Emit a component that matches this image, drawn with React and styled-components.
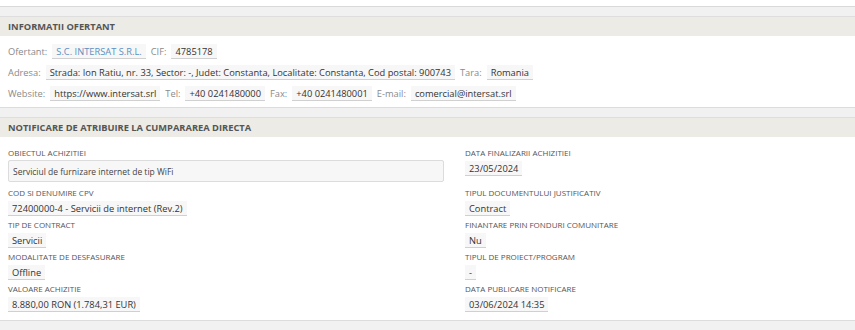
import React from "react";
import styled, { createGlobalStyle } from "styled-components";

const Global = createGlobalStyle`
  html, body { margin: 0; padding: 0; background: #f1f1f1; }
  body { font-family: "Open Sans", "DejaVu Sans", sans-serif; color: #333; }
`;

const Page = styled.div`
  width: 855px;
  height: 330px;
  overflow: hidden;
  background: #f1f1f1;
`;

const PanelTail = styled.div`
  height: 6px;
  background: #fff;
  border-bottom: 1px solid #d9d9d9;
`;

const Panel = styled.section`
  margin-top: 9px;
  background: #fff;
  border-top: 1px solid #dedede;
  border-bottom: 1px solid #dcdcdc;
`;

const PanelHeader = styled.div`
  height: 19px;
  display: flex;
  align-items: center;
  padding: 0 8px;
  background: #ecebe6;
  font-size: 9.3px;
  font-weight: 700;
  color: #555;
`;

const InfoBody = styled.div`
  padding: 8px 8px 6px;
  display: flex;
  flex-direction: column;
  gap: 6px;
`;

const InfoRow = styled.div`
  display: flex;
  align-items: center;
  height: 15px;
`;

const InfoLabel = styled.span`
  font-size: 9.3px;
  color: #8a8a8a;
  margin-right: 5px;
  margin-left: ${(p) => (p.$first ? "0" : "5px")};
`;

const Chip = styled.span`
  display: inline-flex;
  align-items: center;
  height: 15px;
  padding: 0 4px;
  background: #f7f7f7;
  border-bottom: 1px solid #d0d0d0;
  box-sizing: border-box;
  font-size: 9.3px;
  color: ${(p) => (p.$link ? "#5d8fbf" : "#333")};
  white-space: nowrap;
`;

const Grid = styled.div`
  display: grid;
  grid-template-columns: 436px 1fr;
  column-gap: 21px;
  row-gap: 3px;
  padding: 10px 8px 8px;
`;

const Field = styled.div`
  display: flex;
  flex-direction: column;
  align-items: flex-start;
`;

const FieldLabel = styled.div`
  font-size: 8px;
  line-height: 12px;
  color: #555;
  text-transform: uppercase;
  margin-bottom: 2px;
`;

const TextBox = styled.div`
  align-self: stretch;
  height: 22px;
  box-sizing: border-box;
  display: flex;
  align-items: center;
  padding: 0 4px;
  background: #f7f7f7;
  border: 1px solid #dcdcdc;
  border-radius: 2px;
  font-size: 8.5px;
  color: #444;
  margin-top: -1px;
  margin-bottom: 2px;
`;

const infoRows = [
  [
    ["Ofertant:", "S.C. INTERSAT S.R.L.", true],
    ["CIF:", "4785178"],
  ],
  [
    ["Adresa:", "Strada: Ion Ratiu, nr. 33, Sector: -, Judet: Constanta, Localitate: Constanta, Cod postal: 900743"],
    ["Tara:", "Romania"],
  ],
  [
    ["Website:", "https://www.intersat.srl"],
    ["Tel:", "+40 0241480000"],
    ["Fax:", "+40 0241480001"],
    ["E-mail:", "comercial@intersat.srl"],
  ],
];

const fields = [
  ["OBIECTUL ACHIZITIEI", "Serviciul de furnizare internet de tip WiFi", true],
  ["DATA FINALIZARII ACHIZITIEI", "23/05/2024"],
  ["COD SI DENUMIRE CPV", "72400000-4 - Servicii de internet (Rev.2)"],
  ["TIPUL DOCUMENTULUI JUSTIFICATIV", "Contract"],
  ["TIP DE CONTRACT", "Servicii"],
  ["FINANTARE PRIN FONDURI COMUNITARE", "Nu"],
  ["MODALITATE DE DESFASURARE", "Offline"],
  ["TIPUL DE PROIECT/PROGRAM", "-"],
  ["VALOARE ACHIZITIE", "8.880,00 RON (1.784,31 EUR)"],
  ["DATA PUBLICARE NOTIFICARE", "03/06/2024 14:35"],
];

export default function App() {
  return (
    <Page>
      <Global />
      <PanelTail />
      <Panel>
        <PanelHeader>INFORMATII OFERTANT</PanelHeader>
        <InfoBody>
          {infoRows.map((row, i) => (
            <InfoRow key={i}>
              {row.map(([label, value, link], j) => (
                <React.Fragment key={j}>
                  <InfoLabel $first={j === 0}>{label}</InfoLabel>
                  <Chip $link={link}>{value}</Chip>
                </React.Fragment>
              ))}
            </InfoRow>
          ))}
        </InfoBody>
      </Panel>
      <Panel>
        <PanelHeader>NOTIFICARE DE ATRIBUIRE LA CUMPARAREA DIRECTA</PanelHeader>
        <Grid>
          {fields.map(([label, value, box]) => (
            <Field key={label}>
              <FieldLabel>{label}</FieldLabel>
              {box ? <TextBox>{value}</TextBox> : <Chip>{value}</Chip>}
            </Field>
          ))}
        </Grid>
      </Panel>
    </Page>
  );
}
